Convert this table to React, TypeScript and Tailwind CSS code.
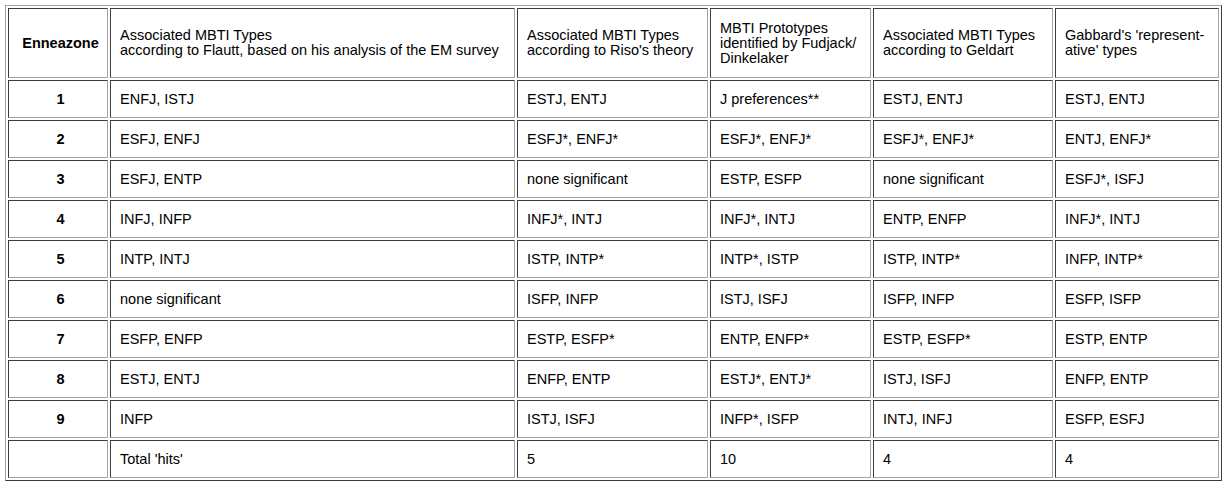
const rows: string[][] = [
  ["1", "ENFJ, ISTJ", "ESTJ, ENTJ", "J preferences**", "ESTJ, ENTJ", "ESTJ, ENTJ"],
  ["2", "ESFJ, ENFJ", "ESFJ*, ENFJ*", "ESFJ*, ENFJ*", "ESFJ*, ENFJ*", "ENTJ, ENFJ*"],
  ["3", "ESFJ, ENTP", "none significant", "ESTP, ESFP", "none significant", "ESFJ*, ISFJ"],
  ["4", "INFJ, INFP", "INFJ*, INTJ", "INFJ*, INTJ", "ENTP, ENFP", "INFJ*, INTJ"],
  ["5", "INTP, INTJ", "ISTP, INTP*", "INTP*, ISTP", "ISTP, INTP*", "INFP, INTP*"],
  ["6", "none significant", "ISFP, INFP", "ISTJ, ISFJ", "ISFP, INFP", "ESFP, ISFP"],
  ["7", "ESFP, ENFP", "ESTP, ESFP*", "ENTP, ENFP*", "ESTP, ESFP*", "ESTP, ENTP"],
  ["8", "ESTJ, ENTJ", "ENFP, ENTP", "ESTJ*, ENTJ*", "ISTJ, ISFJ", "ENFP, ENTP"],
  ["9", "INFP", "ISTJ, ISFJ", "INFP*, ISFP", "INTJ, INFJ", "ESFP, ESFJ"],
  ["", "Total 'hits'", "5", "10", "4", "4"],
];

// inset cell border, like an old border=1 table
const cell =
  "flex items-center pl-[9px] pr-1 border border-t-[#3c3c3c] border-l-[#3c3c3c] border-b-[#a3a3a3] border-r-[#a3a3a3] whitespace-nowrap";

export default function App() {
  return (
    <div
      className="min-h-[485px] w-[1225px] bg-white pt-[5px] pl-[5px] text-[14.5px] leading-[15px] text-black"
      style={{ fontFamily: '"Liberation Sans", Arial, sans-serif' }}
    >
      <div className="grid w-[1217px] grid-cols-[100px_405px_191px_161px_180px_164px] grid-rows-[70px_repeat(10,38px)] gap-[2px] p-[2px] border border-t-[#a3a3a3] border-l-[#a3a3a3] border-b-[#3c3c3c] border-r-[#3c3c3c]">
        <div className={`${cell} justify-center pl-0 pr-0 font-bold`}>Enneazone</div>
        <div className={cell}>
          <div>
            Associated MBTI Types
            <br />
            according to Flautt, based on his analysis of the EM survey
          </div>
        </div>
        <div className={cell}>
          <div>
            Associated MBTI Types
            <br />
            according to Riso's theory
          </div>
        </div>
        <div className={cell}>
          <div>
            MBTI Prototypes
            <br />
            identified by Fudjack/
            <br />
            Dinkelaker
          </div>
        </div>
        <div className={cell}>
          <div>
            Associated MBTI Types
            <br />
            according to Geldart
          </div>
        </div>
        <div className={cell}>
          <div>
            Gabbard's 'represent-
            <br />
            ative' types
          </div>
        </div>

        {rows.map((r, i) =>
          r.map((v, j) =>
            j === 0 ? (
              <div key={`${i}-${j}`} className={`${cell} justify-center pl-0 pr-0 font-bold`}>
                {v}
              </div>
            ) : (
              <div key={`${i}-${j}`} className={cell}>
                {v}
              </div>
            )
          )
        )}
      </div>
    </div>
  );
}
